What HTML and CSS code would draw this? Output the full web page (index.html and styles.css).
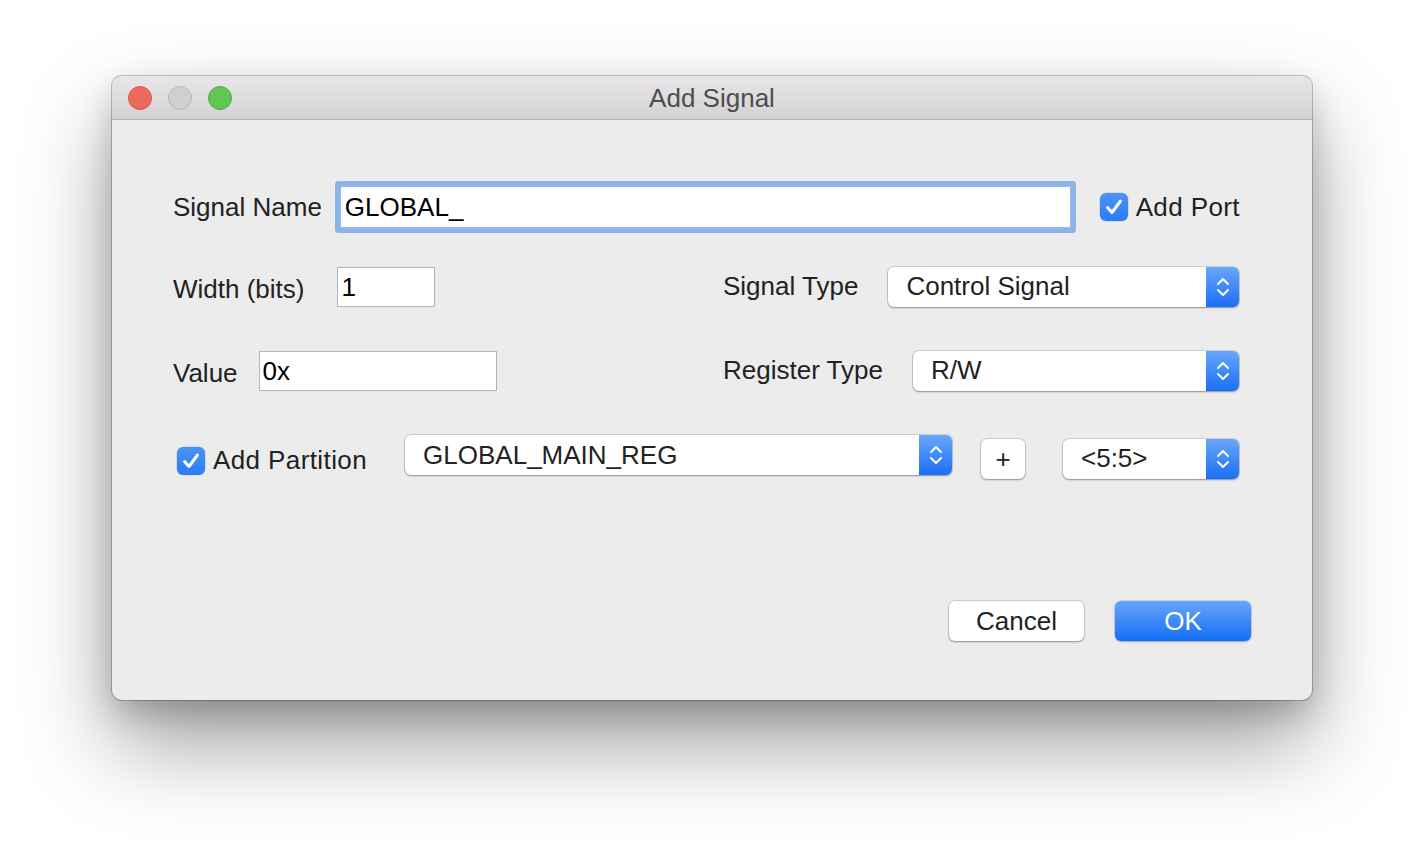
FILE: index.html
```html
<!DOCTYPE html>
<html>
<head>
<meta charset="utf-8">
<link rel="stylesheet" href="styles.css">
</head>
<body>
<div class="window">
  <div class="titlebar">
    <div class="lights">
      <span class="light red"></span>
      <span class="light gray"></span>
      <span class="light green"></span>
    </div>
    <div class="title">Add Signal</div>
  </div>
  <div class="content">
    <div class="row row1">
      <span class="label">Signal Name</span>
      <div class="field focus">GLOBAL_</div>
      <label class="check port">
        <span class="box"><svg viewBox="0 0 28 28" width="28" height="28"><polyline points="7.5,14.5 12,19.5 20.5,8" fill="none" stroke="#fff" stroke-width="3" stroke-linecap="round" stroke-linejoin="round"/></svg></span>
        <span class="label">Add Port</span>
      </label>
    </div>

    <div class="row row2">
      <div class="left">
        <span class="label low">Width (bits)</span>
        <div class="field width-field">1</div>
      </div>
      <div class="right">
        <span class="label">Signal Type</span>
        <div class="popup"><span class="ptext">Control Signal</span><span class="arrows"><svg viewBox="0 0 14 24" width="14" height="24"><polyline points="2,9 7,4 12,9" fill="none" stroke="#fff" stroke-width="2" stroke-linecap="round" stroke-linejoin="round"/><polyline points="2,15 7,20 12,15" fill="none" stroke="#fff" stroke-width="2" stroke-linecap="round" stroke-linejoin="round"/></svg></span></div>
      </div>
    </div>

    <div class="row row3">
      <div class="left">
        <span class="label low">Value</span>
        <div class="field value-field">0x</div>
      </div>
      <div class="right">
        <span class="label">Register Type</span>
        <div class="popup"><span class="ptext">R/W</span><span class="arrows"><svg viewBox="0 0 14 24" width="14" height="24"><polyline points="2,9 7,4 12,9" fill="none" stroke="#fff" stroke-width="2" stroke-linecap="round" stroke-linejoin="round"/><polyline points="2,15 7,20 12,15" fill="none" stroke="#fff" stroke-width="2" stroke-linecap="round" stroke-linejoin="round"/></svg></span></div>
      </div>
    </div>

    <div class="row row4">
      <label class="check partition">
        <span class="box"><svg viewBox="0 0 28 28" width="28" height="28"><polyline points="7.5,14.5 12,19.5 20.5,8" fill="none" stroke="#fff" stroke-width="3" stroke-linecap="round" stroke-linejoin="round"/></svg></span>
        <span class="label">Add Partition</span>
      </label>
      <div class="popup reg-popup"><span class="ptext">GLOBAL_MAIN_REG</span><span class="arrows"><svg viewBox="0 0 14 24" width="14" height="24"><polyline points="2,9 7,4 12,9" fill="none" stroke="#fff" stroke-width="2" stroke-linecap="round" stroke-linejoin="round"/><polyline points="2,15 7,20 12,15" fill="none" stroke="#fff" stroke-width="2" stroke-linecap="round" stroke-linejoin="round"/></svg></span></div>
      <div class="btn plus">+</div>
      <div class="popup range-popup"><span class="ptext">&lt;5:5&gt;</span><span class="arrows"><svg viewBox="0 0 14 24" width="14" height="24"><polyline points="2,9 7,4 12,9" fill="none" stroke="#fff" stroke-width="2" stroke-linecap="round" stroke-linejoin="round"/><polyline points="2,15 7,20 12,15" fill="none" stroke="#fff" stroke-width="2" stroke-linecap="round" stroke-linejoin="round"/></svg></span></div>
    </div>

    <div class="row buttons">
      <div class="btn cancel">Cancel</div>
      <div class="btn ok">OK</div>
    </div>
  </div>
</div>
</body>
</html>
```

FILE: styles.css
```css
html, body {
  margin: 0;
  padding: 0;
  background: #ffffff;
}
body {
  width: 1424px;
  height: 848px;
  overflow: hidden;
  padding: 76px 0 0 112px;
  box-sizing: border-box;
  font-family: "Liberation Sans", Arial, sans-serif;
}
.window {
  width: 1200px;
  height: 624px;
  background: #ececec;
  border-radius: 10px;
  box-shadow: 0 0 0 1px rgba(0,0,0,0.22), 0 44px 90px rgba(0,0,0,0.38), 0 14px 30px rgba(0,0,0,0.18);
  display: flex;
  flex-direction: column;
  overflow: hidden;
}
.titlebar {
  height: 43px;
  flex: none;
  background: linear-gradient(#e8e6e8, #d3d1d3);
  border-bottom: 1px solid #b3b1b3;
  display: flex;
  align-items: center;
  position: relative;
}
.lights {
  display: flex;
  gap: 16px;
  padding-left: 16px;
}
.light {
  width: 24px;
  height: 24px;
  border-radius: 50%;
  box-sizing: border-box;
}
.light.red { background: #ee6a5f; border: 1px solid #d65549; }
.light.gray { background: #d1d0d1; border: 1px solid #b9b8b9; }
.light.green { background: #62c655; border: 1px solid #4fad43; }
.title {
  position: absolute;
  left: 0;
  right: 0;
  top: 0;
  bottom: 0;
  padding-top: 2px;
  display: flex;
  align-items: center;
  justify-content: center;
  font-size: 26px;
  color: #4d4d4d;
  pointer-events: none;
}
.content {
  flex: 1;
  padding: 61px 73px 0 61px;
  display: flex;
  flex-direction: column;
}
.row {
  display: flex;
  align-items: center;
}
.label {
  font-size: 26px;
  color: #222;
  white-space: nowrap;
}
.label.low {
  margin-top: 5px;
}
.field {
  background: #fff;
  box-sizing: border-box;
  border: 1px solid #b5b5b5;
  font-size: 26px;
  color: #000;
  height: 40px;
  line-height: 38px;
  padding-left: 3px;
}
.row1 {
  height: 52px;
}
.field.focus {
  flex: 1;
  height: 42px;
  line-height: 40px;
  margin-left: 18px;
  border: 1px solid #9fb9de;
  padding-left: 4px;
  box-shadow: 0 0 0 5px #8db4ea;
  border-radius: 1px;
}
.check {
  display: flex;
  align-items: center;
}
.check .box {
  width: 28px;
  height: 28px;
  border-radius: 6px;
  background: linear-gradient(#4b92f8, #2a7cf6);
  box-shadow: 0 0 0 0.5px rgba(0,0,0,0.15);
  display: block;
}
.check .box svg { display: block; }
.check .label { margin-left: 8px; }
.port {
  margin-left: 29px;
  margin-right: -1px;
}
.port .label {
  letter-spacing: 0.4px;
}
.row2 {
  margin-top: 33px;
  height: 41px;
  justify-content: space-between;
}
.row3 {
  margin-top: 43px;
  height: 41px;
  justify-content: space-between;
}
.left, .right {
  display: flex;
  align-items: center;
}
.right {
  width: 516px;
}
.right .popup {
  margin-left: 30px;
}
.width-field {
  width: 98px;
  margin-left: 33px;
  margin-top: 1px;
}
.value-field {
  width: 238px;
  margin-left: 21px;
  margin-top: 1px;
}
.popup {
  flex: 1;
  height: 40px;
  background: #fff;
  border-radius: 6px;
  box-shadow: 0 0 0 1px rgba(0,0,0,0.12), 0 1px 2px rgba(0,0,0,0.3);
  display: flex;
  align-items: center;
  overflow: hidden;
  margin-left: 27px;
}
.ptext {
  flex: 1;
  font-size: 26px;
  color: #222;
  padding-left: 18px;
  white-space: nowrap;
}
.arrows {
  width: 33px;
  height: 100%;
  background: linear-gradient(#69a6fa, #1a6ff7);
  display: flex;
  align-items: center;
  justify-content: center;
}
.arrows svg { display: block; }
.row4 {
  margin-top: 44px;
  height: 44px;
}
.partition {
  margin-left: 4px;
  margin-top: 7px;
}
.partition .label {
  letter-spacing: 0.4px;
}
.reg-popup {
  flex: none;
  width: 547px;
  margin-left: 38px;
  align-self: flex-start;
}
.btn {
  box-sizing: border-box;
  background: #fff;
  border-radius: 6px;
  box-shadow: 0 0 0 1px rgba(0,0,0,0.12), 0 1px 2px rgba(0,0,0,0.3);
  font-size: 26px;
  color: #222;
  display: flex;
  align-items: center;
  justify-content: center;
}
.plus {
  width: 44px;
  height: 40px;
  margin-left: 29px;
  align-self: flex-end;
}
.range-popup {
  flex: none;
  width: 176px;
  margin-left: 38px;
  margin-top: 3px;
}
.range-popup .ptext { padding-left: 18px; }
.buttons {
  margin-top: 122px;
  justify-content: flex-end;
  margin-right: -12px;
}
.cancel {
  width: 135px;
  height: 40px;
}
.ok {
  width: 136px;
  height: 40px;
  margin-left: 31px;
  background: linear-gradient(#68a5fa, #146ef7);
  color: #fff;
  box-shadow: 0 0 0 0.5px rgba(0,60,160,0.25), 0 1px 2px rgba(0,0,0,0.25);
}
```
